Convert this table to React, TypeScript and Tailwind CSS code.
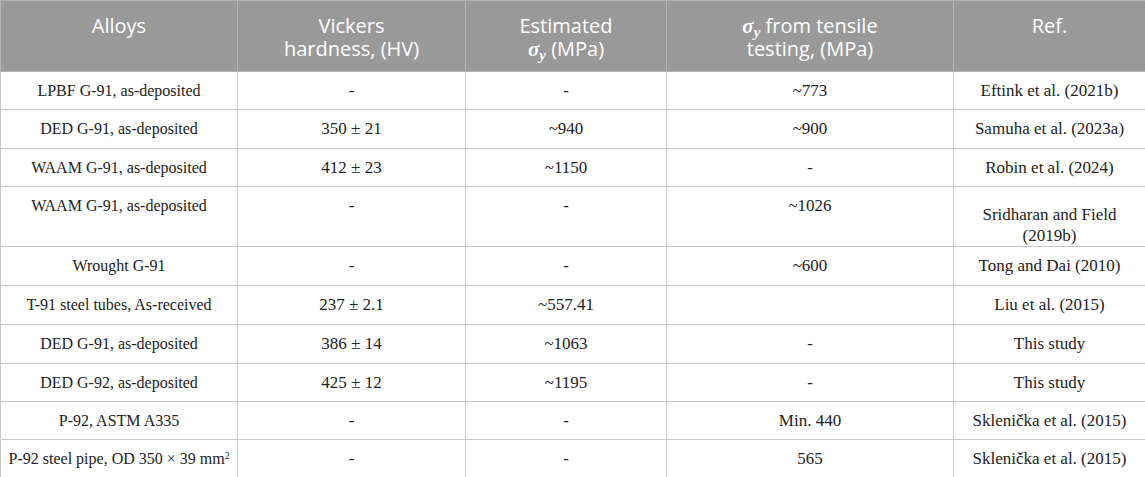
const heads = [
  <>Alloys</>,
  <>Vickers<br />hardness, (HV)</>,
  <>Estimated<br /><Sig /> (MPa)</>,
  <><Sig /> from tensile<br />testing, (MPa)</>,
  <>Ref.</>,
];

function Sig() {
  return (
    <span className="font-['Liberation_Serif',serif] italic font-bold text-[21px] leading-none">
      σ<span className="relative top-[4px] text-[15px] leading-none">y</span>
    </span>
  );
}

const rows: { cells: React.ReactNode[]; tall?: boolean }[] = [
  { cells: ['LPBF G-91, as-deposited', '-', '-', '~773', 'Eftink et al. (2021b)'] },
  { cells: ['DED G-91, as-deposited', '350 ± 21', '~940', '~900', 'Samuha et al. (2023a)'] },
  { cells: ['WAAM G-91, as-deposited', '412 ± 23', '~1150', '-', 'Robin et al. (2024)'] },
  { cells: ['WAAM G-91, as-deposited', '-', '-', '~1026', <>Sridharan and Field<br />(2019b)</>], tall: true },
  { cells: ['Wrought G-91', '-', '-', '~600', 'Tong and Dai (2010)'] },
  { cells: ['T-91 steel tubes, As-received', '237 ± 2.1', '~557.41', '', 'Liu et al. (2015)'] },
  { cells: ['DED G-91, as-deposited', '386 ± 14', '~1063', '-', 'This study'] },
  { cells: ['DED G-92, as-deposited', '425 ± 12', '~1195', '-', 'This study'] },
  { cells: ['P-92, ASTM A335', '-', '-', 'Min. 440', 'Sklenička et al. (2015)'] },
  { cells: [<>P-92 steel pipe, OD 350 × 39 mm<sup className="text-[0.6em] leading-none">2</sup></>, '-', '-', '565', 'Sklenička et al. (2015)'] },
];

const heights = ['h-[38px]', 'h-[39px]', 'h-[38px]', 'h-[58px]', 'h-[39px]', 'h-[39px]', 'h-[39px]', 'h-[38px]', 'h-[38px]', 'h-[39px]'];

export default function App() {
  return (
    <div className="w-[1145px] h-[477px] bg-white overflow-hidden">
      <table className="table-fixed border-collapse w-[1145px]">
        <colgroup>
          <col className="w-[237px]" />
          <col className="w-[228px]" />
          <col className="w-[201px]" />
          <col className="w-[287px]" />
          <col className="w-[192px]" />
        </colgroup>
        <thead>
          <tr className="h-[71px] bg-[#999999]">
            {heads.map((h, i) => (
              <th key={i}
                className="align-top pt-[13px] px-2 text-center font-normal text-white text-[20px] leading-[23px] font-['Open_Sans',sans-serif] border border-[#b3b3b3]">
                {h}
              </th>
            ))}
          </tr>
        </thead>
        <tbody>
          {rows.map((r, ri) => (
            <tr key={ri} className={heights[ri]}>
              {r.cells.map((c, ci) => (
                <td key={ci}
                  className={`align-top px-1 whitespace-nowrap text-center ${ci === 0 ? 'text-[16px]' : 'text-[17px]'} text-[#222] font-['Liberation_Serif',serif] border border-[#c8c8c8] ${r.tall && ci === 4 ? 'pt-[17px] leading-[21px]' : 'pt-[8px] leading-[21px]'}`}>
                  {c}
                </td>
              ))}
            </tr>
          ))}
        </tbody>
      </table>
    </div>
  );
}
